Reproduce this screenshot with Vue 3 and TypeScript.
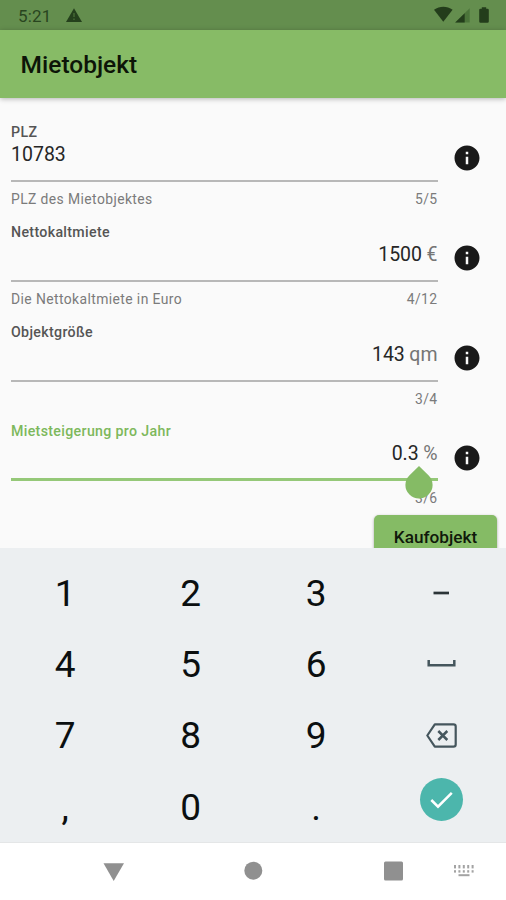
<script setup lang="ts">
interface Field {
  label: string
  value: string
  unit?: string
  helper?: string
  counter: string
  active?: boolean
}

const fields: Field[] = [
  { label: 'PLZ', value: '10783', helper: 'PLZ des Mietobjektes', counter: '5/5' },
  { label: 'Nettokaltmiete', value: '1500', unit: '€', helper: 'Die Nettokaltmiete in Euro', counter: '4/12' },
  { label: 'Objektgröße', value: '143', unit: 'qm', counter: '3/4' },
  { label: 'Mietsteigerung pro Jahr', value: '0.3', unit: '%', counter: '3/6', active: true },
]

const keys: string[] = ['1', '2', '3', 'minus', '4', '5', '6', 'space', '7', '8', '9', 'delete', ',', '0', '.', 'done']
const dots: number[] = [0, 1, 2, 3, 4]
</script>

<template>
  <div class="screen">
    <div class="status">
      <span class="time">5:21</span>
      <svg class="warn" width="16" height="14" viewBox="0 0 16 14">
        <path d="M8 0.3 16 14H0Z" fill="#24401c" />
        <path d="M8 5v4M8 10.4v1.5" stroke="#4a6f39" stroke-width="1.3" />
      </svg>
      <svg class="signals" width="58" height="18" viewBox="0 0 58 18">
        <path d="M0 3.7C5.7-.2 13-.2 18.6 3.7L9.3 15.8Z" fill="#233d1b" />
        <path d="M35.7 2.2V16.5H21.2Z" fill="#4b743a" />
        <path d="M30.7 7.2V16.5H21.2Z" fill="#233d1b" />
        <path d="M47.8 1.2h4.4v1.5h1.3q1.3 0 1.3 1.3v11.5q0 1.3-1.3 1.3h-7q-1.3 0-1.3-1.3V4q0-1.3 1.3-1.3h1.3Z" fill="#233d1b" />
      </svg>
    </div>
    <header class="appbar"><h1>Mietobjekt</h1></header>

    <main class="form">
      <div v-for="f in fields" :key="f.label" class="row" :class="{ active: f.active }">
        <div class="field">
          <div class="label">{{ f.label }}</div>
          <div class="value" :class="{ right: f.unit }">
            <span>{{ f.value }}</span><span v-if="f.unit" class="unit">{{ f.unit }}</span>
            <svg v-if="f.active" class="handle" width="28" height="33" viewBox="0 0 28 33">
              <path d="M14 0 23.7 9.4A13.6 13.6 0 1 1 4.3 9.4Z" fill="#85bb65" />
            </svg>
          </div>
          <div class="help"><span>{{ f.helper }}</span><span>{{ f.counter }}</span></div>
        </div>
        <svg class="info" width="30" height="30" viewBox="0 0 24 24">
          <path d="M12 2C6.48 2 2 6.48 2 12s4.48 10 10 10 10-4.48 10-10S17.52 2 12 2zm1 15h-2v-6h2v6zm0-8h-2V7h2v2z" fill="#191919" />
        </svg>
      </div>
      <button class="next">Kaufobjekt</button>
    </main>

    <section class="keyboard">
      <div v-for="k in keys" :key="k" class="key">
        <svg v-if="k === 'minus'" width="32" height="32" viewBox="0 0 32 32">
          <path d="M7.5 16h15.5" stroke="#2b3437" stroke-width="2.7" />
        </svg>
        <svg v-else-if="k === 'space'" width="32" height="32" viewBox="0 0 32 32">
          <path d="M2.7 12v5.3h25.6v-5.3" fill="none" stroke="#45565d" stroke-width="2.5" />
        </svg>
        <svg v-else-if="k === 'delete'" width="32" height="32" viewBox="0 0 32 32">
          <path d="M8.800 4.300H27.500q2.200 0 2.200 2.200v18q0 2.200-2.200 2.200H8.800L1.300 15.500Z" fill="none" stroke="#45565d" stroke-width="2.2" stroke-linejoin="round" />
          <path d="M12.300 11l9 9M21.300 11l-9 9" stroke="#45565d" stroke-width="2.500" />
        </svg>
        <span v-else-if="k === 'done'" class="done">
          <svg width="43" height="43" viewBox="0 0 43 43">
            <path d="M11.300 22 18 28.700 31.800 14.800" fill="none" stroke="#fff" stroke-width="2.500" />
          </svg>
        </span>
        <span v-else>{{ k }}</span>
      </div>
    </section>

    <nav class="nav">
      <svg width="506" height="57" viewBox="0 0 506 57">
        <path d="M103.500 20.300h20.500L113.700 38Z" fill="#909090" />
        <circle cx="253.300" cy="27.700" r="9" fill="#909090" />
        <rect x="384" y="18.500" width="19" height="19" rx="1.500" fill="#909090" />
        <g fill="#a3a3a3">
          <rect v-for="d in dots" :key="'a' + d" :x="454 + d * 4.4" y="22" width="2" height="3.400" />
          <rect v-for="d in dots" :key="'b' + d" :x="454 + d * 4.4" y="27.200" width="2" height="2.400" />
          <rect x="458.500" y="31.200" width="11" height="2" />
        </g>
      </svg>
    </nav>
  </div>
</template>

<style>
body {
  margin: 0;
}
</style>

<style scoped>
.screen {
  width: 506px;
  height: 900px;
  display: flex;
  flex-direction: column;
  overflow: hidden;
  background: #fafafa;
  font-family: Roboto, sans-serif;
}
.status {
  flex: none;
  height: 30px;
  display: flex;
  align-items: center;
  padding: 0 14px 0 18px;
  background: #648e4e;
  color: #29451f;
}
.time {
  width: 48px;
  font-size: 17px;
  line-height: 30px;
  padding-top: 1px;
  letter-spacing: 0.2px;
}
.signals {
  margin-left: auto;
}
.appbar {
  flex: none;
  height: 68px;
  padding-left: 20.6px;
  background: #87bb66;
  box-shadow: 0 1px 5px rgba(0, 0, 0, 0.28);
}
h1 {
  margin: 0;
  font-size: 24.5px;
  font-weight: 500;
  line-height: 70px;
  color: #0d1508;
}
.form {
  flex: none;
  box-sizing: border-box;
  height: 450px;
  padding: 24px 9px 0 11px;
  overflow: hidden;
}
.row {
  height: 99.8px;
  display: flex;
}
.field {
  width: 427px;
}
.label {
  height: 20px;
  line-height: 21px;
  font-size: 14.2px;
  font-weight: 500;
  letter-spacing: 0.33px;
  color: #555;
}
.value {
  position: relative;
  box-sizing: border-box;
  height: 40px;
  display: flex;
  padding-bottom: 13px;
  border-bottom: 2px solid #b8b8b8;
  font-size: 19.5px;
  line-height: 26.5px;
  color: #262626;
}
.right {
  justify-content: flex-end;
  padding-right: 0.5px;
}
.unit {
  margin-left: 4.5px;
  color: #757575;
}
.help {
  display: flex;
  justify-content: space-between;
  font-size: 13.9px;
  letter-spacing: 0.4px;
  line-height: 35.5px;
  color: #7b7b7b;
}
.help span:last-child {
  padding-right: 0.5px;
}
.info {
  margin: 21.3px 0 0 14px;
}
.active .label {
  color: #7db85c;
}
.active .value {
  border-bottom: 3px solid #95c878;
}
.handle {
  position: absolute;
  right: 5px;
  top: 24.5px;
}
.next {
  display: block;
  width: 123px;
  height: 44px;
  margin: -6.4px 0 0 auto;
  padding: 0;
  border: 0;
  border-radius: 5px;
  background: #85bb65;
  box-shadow: 0 1px 3px rgba(0, 0, 0, 0.35);
  font-family: inherit;
  font-size: 17.2px;
  font-weight: 500;
  color: #10190b;
}
.keyboard {
  flex: none;
  box-sizing: border-box;
  height: 294px;
  padding: 9.5px 1.5px 0 2.5px;
  display: grid;
  grid-template-columns: repeat(4, 1fr);
  grid-auto-rows: 71.3px;
  background: #eceff1;
}
.key {
  display: flex;
  align-items: center;
  justify-content: center;
  font-size: 37px;
  color: #0b0f10;
}
.done {
  width: 43px;
  height: 43px;
  margin-bottom: 15px;
  border-radius: 50%;
  background: #4cb6ac;
}
.nav {
  flex: none;
  height: 57px;
  border-top: 1px solid #e4e6e7;
  background: #fff;
}
</style>
